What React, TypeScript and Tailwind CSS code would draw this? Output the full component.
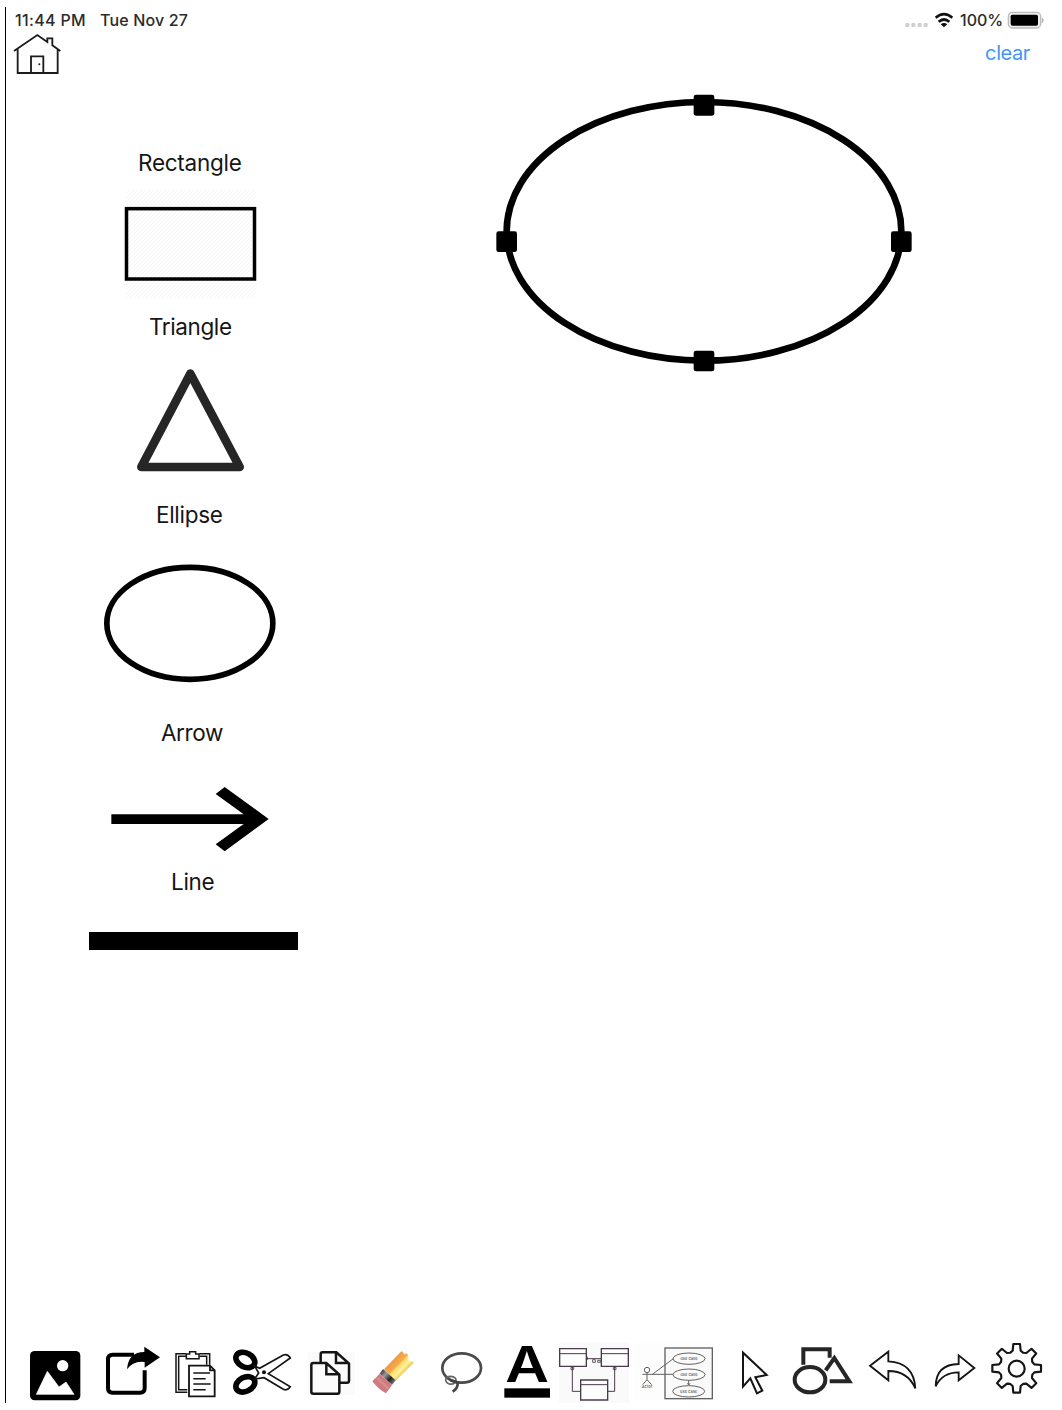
import type { ReactNode } from "react";

function Label({ className, children }: { className: string; children: ReactNode }) {
  return <div className={`h-7 text-[22.5px] leading-7 whitespace-nowrap text-[#161616] ${className}`}>{children}</div>;
}

function Tool({ box, label, className, children }: { box: string; label: string; className: string; children: ReactNode }) {
  return (
    <button aria-label={label} className={`h-16 shrink-0 ${className}`}>
      <svg viewBox={box} className="block h-16 w-full overflow-visible" fill="none" stroke="#151515" strokeWidth="6">
        {children}
      </svg>
    </button>
  );
}

function StatusBar() {
  return (
    <div className="flex h-[26px] items-center text-[16px] font-medium text-[#2b2b2b]">
      <span className="ml-[9px] w-[85px] whitespace-nowrap tracking-[0.35px]">11:44 PM</span>
      <span className="whitespace-nowrap tracking-[0.15px]">Tue Nov 27</span>
      <svg viewBox="69 24 162 72" className="ml-auto h-6 w-[54px]" fill="none" stroke="#111" strokeWidth="8">
        <g fill="#cfcfcf" stroke="none">
          <rect x="76" y="69" width="12" height="12" rx="3" />
          <rect x="94" y="69" width="12" height="12" rx="3" />
          <rect x="113" y="69" width="12" height="12" rx="3" />
          <rect x="131" y="69" width="12" height="12" rx="3" />
        </g>
        <path d="M167 53 Q192 32 217 53 M176 65 Q192 52 208 65" />
        <path d="M182 73 Q192 65 202 73 L192 82Z" fill="#111" stroke="none" />
      </svg>
      <span className="ml-[3px] w-[47px] whitespace-nowrap">100%</span>
      <svg viewBox="381 24 114 72" className="mr-[17px] h-6 w-[38px]">
        <rect x="385" y="37" width="97" height="47" rx="12" fill="#eee" stroke="#bcbcbc" strokeWidth="4" />
        <rect x="392" y="44" width="82" height="33" rx="5" fill="#000" />
        <path d="M487 54 Q493 60 487 68Z" fill="#aaa" stroke="#aaa" strokeWidth="2" />
      </svg>
    </div>
  );
}

function Header() {
  return (
    <div className="flex h-[53px] items-start justify-between">
      <svg viewBox="36 96 156 132" className="ml-[6px] h-11 w-[52px]" fill="none" stroke="#1c1c1c" strokeWidth="5.5">
        <path d="M42 150 L112 102 L142 123 V112 H157 V133 L181 150 M53 144 V216 H173 V144 M93 216 V166 H130 V216" />
        <circle cx="118" cy="190" r="3" fill="#222" stroke="none" />
      </svg>
      <button className="mt-[6px] mr-[32px] text-[20px] leading-7 tracking-[-0.4px] text-[#4296f7]">clear</button>
    </div>
  );
}

function ShapeList() {
  return (
    <div className="ml-[74px] flex w-60 flex-col pt-[63px]">
      <Label className="pl-[58px] tracking-[-0.25px]">Rectangle</Label>
      <svg viewBox="0 111 720 408" className="h-[136px] w-60">
        <defs>
          <pattern id="hatch" width="12" height="12" patternUnits="userSpaceOnUse">
            <path d="M0 12 L12 0" stroke="#f5f5f5" strokeWidth="3" />
          </pattern>
        </defs>
        <rect x="137" y="148" width="390" height="328" fill="url(#hatch)" />
        <rect x="139.5" y="206" width="384" height="211" fill="none" stroke="#000" strokeWidth="10.5" />
      </svg>
      <Label className="pl-[69px] tracking-[-0.4px]">Triangle</Label>
      <svg viewBox="0 3 720 480" className="h-40 w-60">
        <path d="M331 101 L184 381 H479Z" fill="none" stroke="#262626" strokeWidth="26" strokeLinejoin="round" />
      </svg>
      <Label className="pl-[76px] tracking-[-0.3px]">Ellipse</Label>
      <svg viewBox="0 -33 720 570" className="h-[190px] w-60">
        <ellipse cx="329.5" cy="250" rx="249" ry="168" fill="none" stroke="#000" strokeWidth="17" />
      </svg>
      <Label className="pl-[81px] tracking-[-0.4px]">Arrow</Label>
      <svg viewBox="0 111 720 363" className="h-[121px] w-60">
        <path d="M94 313 H491 L407 252 L434 231 L566 327 L434 424 L407 403 L491 342 H94Z" />
      </svg>
      <Label className="pl-[91px] tracking-[-0.3px]">Line</Label>
      <div className="mt-[36px] ml-[9px] h-[18px] w-[209px] bg-black" />
    </div>
  );
}

function Canvas() {
  return (
    <svg viewBox="0 18 1320 882" className="ml-[160px] h-[294px] w-[440px]">
      <ellipse cx="672" cy="454" rx="592" ry="388" fill="none" stroke="#000" strokeWidth="20" />
      <rect x="641" y="44" width="62" height="63" rx="7" />
      <rect x="49" y="454" width="62" height="62" rx="7" />
      <rect x="1233" y="454" width="62" height="62" rx="7" />
      <rect x="641" y="812" width="62" height="62" rx="7" />
    </svg>
  );
}

const gearTeeth = [0, 45, 90, 135, 180, 225, 270, 315];

function gearPath() {
  const profile = [
    [-19, -47],
    [-12, -53],
    [-10, -73],
    [10, -73],
    [12, -53],
    [19, -47],
  ];
  const points = gearTeeth.flatMap((deg) => {
    const a = (deg * Math.PI) / 180;
    return profile.map(([x, y]) => {
      const px = 524 + x * Math.cos(a) - y * Math.sin(a);
      const py = 115 + x * Math.sin(a) + y * Math.cos(a);
      return `${px.toFixed(1)} ${py.toFixed(1)}`;
    });
  });
  return `M${points.join("L")}Z`;
}

function Toolbar() {
  return (
    <div className="mt-auto ml-4 flex h-[63px] items-start">
      <Tool label="Image" box="66 30 210 192" className="w-[70px]">
        <rect x="90" y="63" width="151" height="148" rx="14" fill="#000" stroke="none" />
        <circle cx="188" cy="107" r="17" fill="#fff" stroke="none" />
        <path d="M109 193 L142 124 L177 171 L198 156 L222 193Z" fill="#fff" stroke="#fff" strokeWidth="2" />
      </Tool>
      <Tool label="Share" box="276 30 228 192" className="w-[76px]">
        <path d="M402 74 H338 Q324 74 324 88 V174 Q324 188 338 188 H420 Q434 188 434 174 V121" stroke="#000" strokeWidth="12" />
        <path d="M381 118 Q385 66 433 66 V50 L480 82 L434 113 V96 Q400 91 381 118Z" fill="#000" stroke="none" />
      </Tool>
      <Tool label="Paste" box="504 30 168 192" className="w-14">
        <path d="M558 71 H528 V187 H562 M598 71 H629 V104 M558 79 H536 V179 H562 M598 79 H620 V104" strokeWidth="4.5" />
        <path d="M559 86 V72 H569 V65 H587 V72 H597 V86Z" fill="#fff" strokeWidth="4.5" />
        <path d="M567 107 H630 L644 121 V199 H567Z M630 107 V121 H644" fill="#fff" strokeWidth="5.5" />
        <path d="M580 129 H630 M580 146 H617 M580 162 H632 M580 179 H617" strokeWidth="4.5" />
      </Tool>
      <Tool label="Cut" box="12 30 228 192" className="w-[76px]">
        <ellipse cx="76" cy="90" rx="30" ry="21" transform="rotate(27 76 90)" stroke="#000" strokeWidth="17" />
        <ellipse cx="76" cy="163" rx="30" ry="21" transform="rotate(-27 76 163)" stroke="#000" strokeWidth="17" />
        <path d="M104 108 L119 115 L190 75 Q203 70 211 84 L145 131 L211 170 Q203 183 190 178 L132 143 L104 147 L116 129Z" fill="#fff" strokeWidth="5" />
        <circle cx="132" cy="127" r="6" fill="#111" stroke="none" />
      </Tool>
      <Tool label="Copy" box="240 30 186 192" className="w-[62px]">
        <rect x="262" y="65" width="143" height="129" fill="#fbfbfb" stroke="none" />
        <path d="M302 98 V73 Q302 67 308 67 H349 L387 101 V152 Q387 158 381 158 H360 M348 68 V99 H386" strokeWidth="7.5" />
        <path d="M280 99 H319 L358 134 V185 Q358 191 352 191 H280 Q274 191 274 185 V105 Q274 99 280 99Z M319 100 V133 H357" fill="#fcfcfc" strokeWidth="7.5" />
      </Tool>
      <Tool label="Erase" box="426 30 198 192" className="w-[66px]">
        <defs>
          <linearGradient id="pencil" x1="515" y1="88" x2="556" y2="127" gradientUnits="userSpaceOnUse">
            <stop offset="0" stopColor="#eb973f" />
            <stop offset="0.42" stopColor="#f7a94f" />
            <stop offset="0.52" stopColor="#ffdf68" />
            <stop offset="0.75" stopColor="#fff0a0" />
            <stop offset="1" stopColor="#efc02d" />
          </linearGradient>
          <linearGradient id="ferrule" x1="482" y1="122" x2="522" y2="158" gradientUnits="userSpaceOnUse">
            <stop offset="0" stopColor="#333" />
            <stop offset="0.35" stopColor="#999" />
            <stop offset="0.7" stopColor="#222" />
            <stop offset="1" stopColor="#777" />
          </linearGradient>
        </defs>
        <g stroke="none">
          <path d="M492 118 L545 63 L553 73 L562 70 L567 93 L583 96 L527 152Z" fill="url(#pencil)" />
          <path d="M489 117 L527 151 L516 165 L479 131Z" fill="url(#ferrule)" />
          <path d="M479 131 L516 165 L498 190 Q475 178 457 154Z" fill="#ce7b80" />
          <path d="M473 140 L509 174 L504 181 L468 146Z" fill="#d88b90" />
        </g>
      </Tool>
      <Tool label="Lasso" box="24 30 198 192" className="w-[66px]">
        <ellipse cx="125" cy="114" rx="58" ry="44" stroke="#4a4a4a" strokeWidth="8" />
        <path d="M77 150 Q78 139 92 139 Q110 141 108 153 Q103 165 88 162 Q78 159 77 150Z" stroke="#666" strokeWidth="5" />
        <path d="M91 151 Q112 154 113 162 Q113 175 98 185" stroke="#444" strokeWidth="8" />
      </Tool>
      <Tool label="Text" box="222 30 186 192" className="w-[62px]">
        <text x="256" y="156" textLength="131" lengthAdjust="spacingAndGlyphs" fill="#000" stroke="none" className="font-['Inter'] text-[150px] font-semibold">A</text>
        <rect x="253" y="175" width="137" height="28" fill="#000" stroke="none" />
      </Tool>
      <Tool label="Class diagram" box="408 30 234 192" className="w-[78px]">
        <rect x="417" y="36" width="210" height="182" fill="#fafafa" stroke="none" />
        <g stroke="#493b49" strokeWidth="4">
          <path d="M419 56 H499 V109 H419Z M544 56 H625 V109 H544Z M482 150 H563 V210 H482Z" fill="#fdfdfd" />
          <path d="M419 71 H499 M544 71 H625 M482 164 H563" strokeWidth="3" />
          <path d="M457 109 V184 H482 M584 109 V184 H563 M499 86 H544" strokeWidth="3" />
          <path d="M453 112 H461 V119 H453Z M580 112 H588 V119 H580Z M502 80 V90 M518 89 H526 V97 H518Z M533 91 H541 V97 H533Z" strokeWidth="2.5" />
        </g>
      </Tool>
      <Tool label="Use case diagram" box="12 30 282 192" className="w-[94px]">
        <rect x="15" y="40" width="235" height="170" fill="#fdfdfd" stroke="none" />
        <g stroke="#626262" strokeWidth="3">
          <rect x="105" y="54" width="142" height="152" fill="#fafafa" strokeWidth="4" />
          <ellipse cx="177" cy="86" rx="48" ry="17" />
          <ellipse cx="177" cy="134" rx="48" ry="17" />
          <ellipse cx="176" cy="184" rx="48" ry="17" />
          <circle cx="51" cy="120" r="8" />
          <path d="M51 128 V149 M37 133 H129 M51 149 L38 164 M51 149 L65 164 M67 133 L130 86" />
          <path d="M176 151 V165 M172 160 L176 165 L180 160" strokeWidth="3" />
        </g>
        <g fill="#555" stroke="none" textAnchor="middle" className="font-['Inter'] text-[12px] font-medium">
          <text x="177" y="90">use case</text>
          <text x="177" y="138">use case</text>
          <text x="176" y="188">use case</text>
          <text x="51" y="174">Actor</text>
        </g>
      </Tool>
      <Tool label="Select" box="294 30 156 192" className="w-[52px]">
        <path d="M339 68 V170 L361 145 L381 190 L397 182 L376 142 L410 135Z" />
      </Tool>
      <Tool label="Shapes" box="450 30 240 192" className="w-20">
        <path d="M520 104 V58 H599 V83" stroke="#262626" strokeWidth="12" />
        <path d="M587 121 L613 84 L658 154 H599" stroke="#262626" strokeWidth="12" />
        <ellipse cx="540" cy="149" rx="46" ry="38" stroke="#262626" strokeWidth="12" />
      </Tool>
      <Tool label="Undo" box="54 30 195 192" className="w-[65px]">
        <path d="M84 107 L139 65 V94 Q216 98 220 175 Q197 123 139 123 V151Z" strokeWidth="5.5" />
      </Tool>
      <Tool label="Redo" box="249 30 174 192" className="w-[58px]">
        <path d="M397 114 L350 76 V102 Q282 103 281 169 Q301 127 350 127 V151Z" strokeWidth="5.5" />
      </Tool>
      <Tool label="Settings" box="423 30 189 192" className="w-[63px]">
        <path d={gearPath()} strokeWidth="6.5" strokeLinejoin="round" />
        <circle cx="524" cy="116" r="24" strokeWidth="6.5" />
      </Tool>
    </div>
  );
}

export default function App() {
  return (
    <div className="h-[1410px] w-[1062px] overflow-hidden bg-white pt-[7px] pl-[5px] font-['Inter',sans-serif]">
      <div className="flex h-[1396px] flex-col border-l border-black">
        <StatusBar />
        <Header />
        <div className="flex items-start">
          <ShapeList />
          <Canvas />
        </div>
        <Toolbar />
      </div>
    </div>
  );
}
